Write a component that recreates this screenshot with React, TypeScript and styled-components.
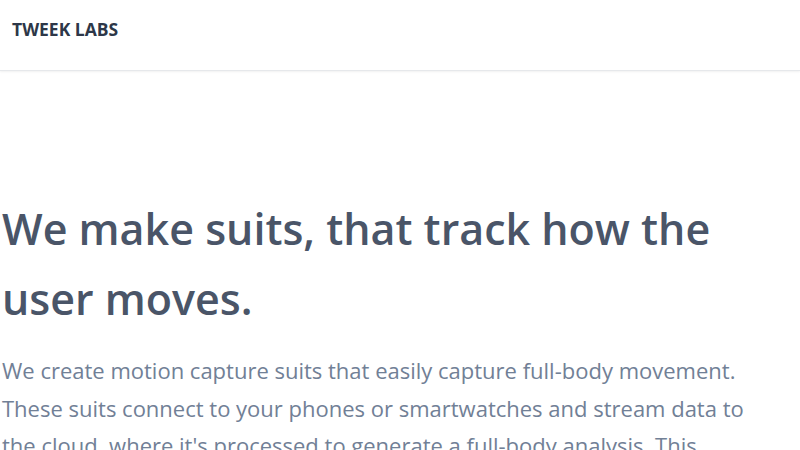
import React from "react";
import styled, { createGlobalStyle } from "styled-components";

const GlobalStyle = createGlobalStyle`
  html, body {
    margin: 0;
    padding: 0;
    background: #ffffff;
    font-family: "Open Sans", "Noto Sans", sans-serif;
  }
`;

const Header = styled.header`
  display: flex;
  align-items: flex-start;
  height: 71px;
  padding: 17px 12px 0;
  box-sizing: border-box;
  border-bottom: 1px solid #e6e8eb;
  box-shadow: 0 1px 2px rgba(0, 0, 0, 0.06);
`;

const Logo = styled.div`
  font-size: 17.5px;
  line-height: 24px;
  font-weight: 700;
  color: #2d3748;
`;

const Hero = styled.main`
  padding: 123px 0 0 2px;
  max-width: 750px;
`;

const Title = styled.h1`
  margin: 0 0 18px;
  font-size: 43px;
  font-weight: 600;
  line-height: 70px;
  color: #4a5568;
`;

const Lead = styled.p`
  margin: 0;
  font-size: 22px;
  line-height: 37.5px;
  color: #718096;
`;

const App = () => {
  return (
    <>
      <GlobalStyle />
      <Header>
        <Logo>TWEEK LABS</Logo>
      </Header>
      <Hero>
        <Title>We make suits, that track how the user moves.</Title>
        <Lead>
          We create motion capture suits that easily capture full-body movement.
          These suits connect to your phones or smartwatches and stream data to
          the cloud, where it's processed to generate a full-body analysis. This
          analysis helps users understand how they move.
        </Lead>
      </Hero>
    </>
  );
};

export default App;
